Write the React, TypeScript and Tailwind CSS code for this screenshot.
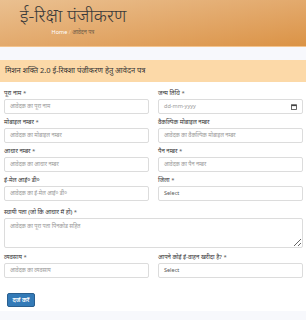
import React from 'react';

const font = { fontFamily: '"Noto Sans", "Liberation Sans", sans-serif' };

function Label({ text, req }: { text: string; req?: boolean }) {
  return (
    <div className="h-[9px] mb-[1px] text-[6px] leading-[9px] text-[#333] whitespace-nowrap">
      {text}
      {req && <span className="text-[#555]"> *</span>}
    </div>
  );
}

function Box({ children }: { children: React.ReactNode }) {
  return (
    <div className="h-[15px] border border-[#dcdcdc] rounded-[2px] bg-white flex items-center px-[5px] text-[5.5px] text-[#999] whitespace-nowrap overflow-hidden">
      {children}
    </div>
  );
}

function Field({ label, req, ph }: { label: string; req?: boolean; ph: string }) {
  return (
    <div className="mb-[4px]">
      <Label text={label} req={req} />
      <Box>{ph}</Box>
    </div>
  );
}

export default function App() {
  return (
    <div className="w-[306px] h-[320px] bg-[#f7f8fc] overflow-hidden" style={font}>
      {/* header */}
      <header className="h-[47px] bg-gradient-to-br from-[#eac090] to-[#db9345] border-b border-[#f3c48f]">
        <div className="w-[146px] text-center pt-[3px]">
          <h1 className="text-[18px] leading-[24px] text-[#3a3a3a] font-light">ई-रिक्षा पंजीकरण</h1>
          <p className="text-[5.5px] leading-[8px] mt-[1px]">
            <span className="text-white">Home</span>
            <span className="text-[#f3dcc0]"> / </span>
            <span className="text-[#6e5b48]">आवेदन पत्र</span>
          </p>
        </div>
      </header>

      {/* card */}
      <div className="mt-[13px] bg-white">
        <div className="h-[22px] bg-[#fcd9a8] flex items-center px-[5px] text-[7.5px] text-[#333]">
          मिशन शक्ति 2.0 ई-रिक्शा पंजीकरण हेतु आवेदन पत्र
        </div>

        <form className="pl-[4px] pr-[3px] pt-[7px] pb-[3px]">
          <div className="grid grid-cols-2 gap-x-[9px]">
            <Field label="पूरा नाम" req ph="आवेदक का पूरा नाम" />
            <div className="mb-[4px]">
              <Label text="जन्म तिथि" req />
              <div className="h-[15px] border border-[#dcdcdc] rounded-[2px] bg-white flex items-center justify-between px-[5px] text-[5.5px] text-[#999]">
                <span>dd-mm-yyyy</span>
                <svg width="6" height="6" viewBox="0 0 6 6" className="text-[#444]">
                  <rect x="0.5" y="0.8" width="5" height="4.7" fill="none" stroke="currentColor" strokeWidth="0.8" />
                  <rect x="0.5" y="0.8" width="5" height="1.3" fill="currentColor" />
                </svg>
              </div>
            </div>
            <Field label="मोबाइल नम्बर" req ph="आवेदक का मोबाइल नम्बर" />
            <Field label="वैकल्पिक मोबाइल नम्बर" ph="आवेदक का वैकल्पिक मोबाइल नम्बर" />
            <Field label="आधार नम्बर" req ph="आवेदक का आधार नम्बर" />
            <Field label="पैन नम्बर" req ph="आवेदक का पैन नम्बर" />
            <Field label="ई-मेल आई० डी०" ph="आवेदक का ई-मेल आई० डी०" />
            <div className="mb-[4px]">
              <Label text="जिला" req />
              <Box>
                <span className="text-[#555]">Select</span>
              </Box>
            </div>
          </div>

          <div className="mb-[5px] mt-[3px]">
            <Label text="स्थायी पता (जो कि आधार में हो)" req />
            <textarea
              placeholder="आवेदक का पूरा पता पिनकोड सहित"
              className="block w-full h-[30px] border border-[#dcdcdc] rounded-[2px] px-[5px] py-[3px] text-[5.5px] leading-[8px] placeholder:text-[#999] outline-none"
            />
          </div>

          <div className="grid grid-cols-2 gap-x-[9px]">
            <Field label="व्यवसाय" req ph="आवेदक का व्यवसाय" />
            <div className="mb-[4px]">
              <Label text="आपने कोई ई-वाहन खरीदा है?" req />
              <Box>
                <span className="text-[#555]">Select</span>
              </Box>
            </div>
          </div>

          <button
            type="button"
            className="mt-[11px] ml-[3px] h-[14px] w-[28px] bg-[#337ab7] border border-[#2a5f8f] rounded-[2px] text-white text-[6px] font-semibold leading-none"
          >
            दर्ज करें
          </button>
        </form>
      </div>
    </div>
  );
}
